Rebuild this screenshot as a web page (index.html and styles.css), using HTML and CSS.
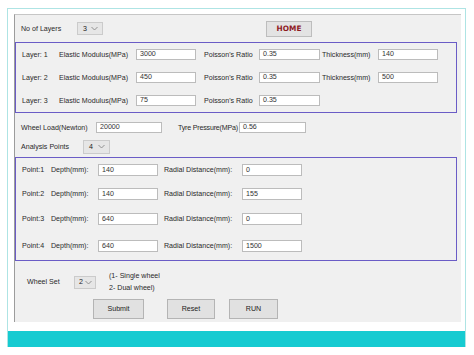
FILE: index.html
```html
<!DOCTYPE html>
<html>
<head>
<meta charset="UTF-8">
<title>Pavement Analysis</title>
<link rel="stylesheet" href="styles.css">
</head>
<body>

<div class="frame">
<div class="panel">

  <div class="top-row">
    <span class="lbl w-layers">No of Layers</span>
    <div class="sel sel-layers"><span>3</span><svg width="7" height="5" viewBox="0 0 7 5"><path d="M0.5 1 L3.5 4 L6.5 1" fill="none" stroke="#888" stroke-width="0.9"/></svg></div>
    <button class="home">HOME</button>
  </div>

  <!-- LAYERS -->
  <div class="group layers">
    <div class="layer-row">
      <span class="lbl">Layer: 1</span>
      <span class="lbl">Elastic Modulus(MPa)</span>
      <div class="inp">3000</div>
      <span class="lbl pl8">Poisson's Ratio</span>
      <div class="inp">0.35</div>
      <span class="lbl pl2">Thickness(mm)</span>
      <div class="inp">140</div>
    </div>
    <div class="layer-row">
      <span class="lbl">Layer: 2</span>
      <span class="lbl">Elastic Modulus(MPa)</span>
      <div class="inp">450</div>
      <span class="lbl pl8">Poisson's Ratio</span>
      <div class="inp">0.35</div>
      <span class="lbl pl2">Thickness(mm)</span>
      <div class="inp">500</div>
    </div>
    <div class="layer-row">
      <span class="lbl">Layer: 3</span>
      <span class="lbl">Elastic Modulus(MPa)</span>
      <div class="inp">75</div>
      <span class="lbl pl8">Poisson's Ratio</span>
      <div class="inp">0.35</div>
    </div>
  </div>

  <div class="load-row">
    <span class="lbl w-load">Wheel Load(Newton)</span>
    <div class="inp inp-load">20000</div>
    <span class="lbl w-tyre">Tyre Pressure(MPa)</span>
    <div class="inp inp-tyre">0.56</div>
  </div>

  <div class="analysis-row">
    <span class="lbl w-analysis">Analysis Points</span>
    <div class="sel sel-points"><span>4</span><svg width="7" height="5" viewBox="0 0 7 5"><path d="M0.5 1 L3.5 4 L6.5 1" fill="none" stroke="#888" stroke-width="0.9"/></svg></div>
  </div>

  <!-- POINTS -->
  <div class="group points">
    <div class="point-row">
      <span class="lbl">Point:1</span>
      <span class="lbl">Depth(mm):</span>
      <div class="inp">140</div>
      <span class="lbl pl6">Radial Distance(mm):</span>
      <div class="inp">0</div>
    </div>
    <div class="point-row">
      <span class="lbl">Point:2</span>
      <span class="lbl">Depth(mm):</span>
      <div class="inp">140</div>
      <span class="lbl pl6">Radial Distance(mm):</span>
      <div class="inp">155</div>
    </div>
    <div class="point-row">
      <span class="lbl">Point:3</span>
      <span class="lbl">Depth(mm):</span>
      <div class="inp">640</div>
      <span class="lbl pl6">Radial Distance(mm):</span>
      <div class="inp">0</div>
    </div>
    <div class="point-row last">
      <span class="lbl">Point:4</span>
      <span class="lbl">Depth(mm):</span>
      <div class="inp">640</div>
      <span class="lbl pl6">Radial Distance(mm):</span>
      <div class="inp">1500</div>
    </div>
  </div>

  <div class="wheel-row">
    <span class="lbl w-wheel">Wheel Set</span>
    <div class="sel sel-wheel"><span>2</span><svg width="7" height="5" viewBox="0 0 7 5"><path d="M0.5 1 L3.5 4 L6.5 1" fill="none" stroke="#888" stroke-width="0.9"/></svg></div>
    <div class="note">(1- Single wheel<br>2- Dual wheel)</div>
  </div>

  <div class="btn-row">
    <button class="btn submit">Submit</button>
    <button class="btn reset">Reset</button>
    <button class="btn run">RUN</button>
  </div>

</div>
<div class="teal-bar"></div>
</div>

</body>
</html>
```

FILE: styles.css
```css
body{
    margin:0;
    background:white;
    font-family:"Liberation Sans", Arial, sans-serif;
    font-size:7.1px;
    color:#2a2a2a;
}

.frame{
    margin:8px 0 0 7px;
    width:457px;
    border:1px solid #aee4e4;
    border-bottom:none;
    padding-top:5px;
}

.panel{
    margin-left:6px;
    width:446px;
    height:307px;
    background:#f0f0f0;
    border-top:1px solid #c6c6c6;
    border-left:1px solid #9c9c9c;
    box-sizing:content-box;
}

.teal-bar{
    margin-top:9px;
    height:16px;
    background:#16cbd1;
}

.lbl{
    white-space:nowrap;
}

/* top row */
.top-row{
    height:27px;
    display:flex;
    align-items:center;
    padding-left:6px;
}
.w-layers{width:56px;}

.sel{
    display:flex;
    align-items:center;
    justify-content:space-between;
    box-sizing:border-box;
    padding:0 4px 0 5px;
    background:#e6e6e6;
    border:1px solid #cbcbcb;
    color:#222;
}
.sel-layers{width:26px; height:13px;}
.sel-points{width:27px; height:14px;}
.sel-wheel{width:22px; height:13px; padding:0 3px 0 4px;}

.home{
    margin-left:163px;
    width:46px;
    height:16px;
    background:#e3e3e3;
    border:1px solid #bdbdbd;
    color:#8e1a1f;
    font-family:"DejaVu Sans", sans-serif;
    font-weight:bold;
    font-size:7.4px;
    padding:0;
}

/* group boxes */
.group{
    width:440px;
    border:1px solid #6a5cc6;
}

.layer-row{
    height:23px;
    display:grid;
    grid-template-columns:37px 77px 60px 63px 61px 58px 60px;
    align-items:center;
    padding-left:6px;
}
.pl8{padding-left:8px;}
.pl2{padding-left:2px;}
.pl6{padding-left:6px;}

.inp{
    box-sizing:border-box;
    height:11px;
    line-height:9px;
    background:white;
    border:1px solid #bcbcbc;
    padding-left:3px;
    color:#333;
}

/* load rows */
.load-row{
    height:27px;
    display:flex;
    align-items:center;
    padding:2px 0 0 6px;
    box-sizing:border-box;
}
.w-load{width:75px;}
.inp-load{width:66px;}
.w-tyre{width:61px; margin-left:16px; letter-spacing:-0.2px;}
.inp-tyre{width:67px;}

.analysis-row{
    height:17px;
    display:flex;
    align-items:center;
    padding:0 0 4px 6px;
    box-sizing:border-box;
}
.w-analysis{width:62px;}

.point-row{
    height:25px;
    display:grid;
    grid-template-columns:29px 47px 60px 84px 60px;
    align-items:center;
    padding-left:6px;
}
.point-row:first-child{height:23px;}
.point-row.last{height:29px;}
.point-row .inp{height:12px; line-height:10px;}

/* wheel set */
.wheel-row{
    height:38px;
    display:flex;
    align-items:center;
    padding-left:12px;
    padding-top:4px;
    box-sizing:border-box;
}
.w-wheel{width:47px;}
.note{
    margin-left:13px;
    line-height:12px;
}

.btn-row{
    display:flex;
    padding-left:78px;
    height:20px;
}
.btn{
    height:20px;
    padding:0;
    background:#e1e1e1;
    border:1px solid #b4b4b4;
    font-family:"Liberation Sans", Arial, sans-serif;
    font-size:7.1px;
    color:#222;
}
.submit{width:51px;}
.reset{width:48px; margin-left:23px;}
.run{width:49px; margin-left:14px;}
```
